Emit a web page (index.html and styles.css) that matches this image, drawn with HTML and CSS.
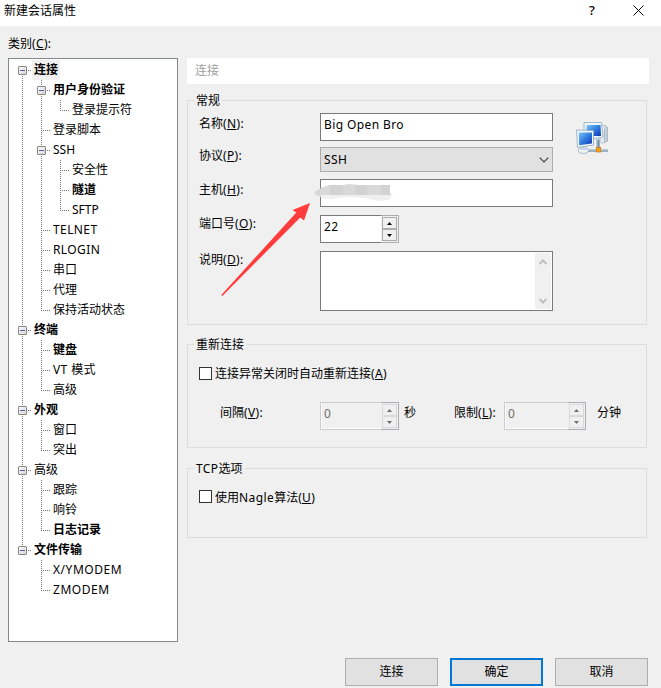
FILE: index.html
```html
<!DOCTYPE html>
<html lang="zh-CN">
<head>
<meta charset="utf-8">
<title>新建会话属性</title>
<link rel="stylesheet" href="styles.css">
</head>
<body>
<svg class="defs" width="0" height="0">
  <defs>
    <linearGradient id="knob" x1="0" y1="0" x2="1" y2="1"><stop offset="0" stop-color="#fff"/><stop offset="1" stop-color="#d4d4d4"/></linearGradient>
    <linearGradient id="screen" x1="0" y1="0" x2="1" y2="1"><stop offset="0" stop-color="#7fc4f8"/><stop offset=".5" stop-color="#2f7de0"/><stop offset="1" stop-color="#1536b0"/></linearGradient>
    <linearGradient id="case" x1="0" y1="0" x2="1" y2="0"><stop offset="0" stop-color="#fff"/><stop offset="1" stop-color="#a9bcc9"/></linearGradient>
    <symbol id="v" viewBox="0 0 19 20"><path class="dot" d="M9.5 0V20"/></symbol>
    <symbol id="t" viewBox="0 0 19 20"><path class="dot" d="M9.5 0V20M11 10.5H18"/></symbol>
    <symbol id="l" viewBox="0 0 19 20"><path class="dot" d="M9.5 0V11M11 10.5H18"/></symbol>
    <symbol id="box" viewBox="0 0 19 20"><rect x="5.5" y="6.5" width="8" height="8" rx=".6" fill="url(#knob)" stroke="#858585"/><path d="M7 10.5H12" stroke="#4b63a7"/><path class="dot" d="M15 10.5H18"/></symbol>
    <symbol id="bt" viewBox="0 0 19 20"><path class="dot" d="M9.5 0V6M9.5 16V20"/><use href="#box"/></symbol>
    <symbol id="bf" viewBox="0 0 19 20"><path class="dot" d="M9.5 16V20"/><use href="#box"/></symbol>
    <symbol id="bl" viewBox="0 0 19 20"><path class="dot" d="M9.5 0V6"/><use href="#box"/></symbol>
  </defs>
</svg>
<div class="window">
  <header class="titlebar">
    <span class="title">新建会话属性</span>
    <span class="help">?</span>
    <svg class="close" width="11" height="11" viewBox="0 0 11 11"><path d="M.5 .5L10.5 10.5M10.5 .5L.5 10.5" stroke="#000" fill="none"/></svg>
  </header>
  <main class="body">
    <section class="side">
      <div class="side-label">类别<span class="key">(<u>C</u>):</span></div>
      <div class="tree">
        <div class="row"><svg><use href="#bf"/></svg><b class="sel">连接</b></div>
        <div class="row"><svg><use href="#v"/></svg><svg><use href="#bt"/></svg><b>用户身份验证</b></div>
        <div class="row"><svg><use href="#v"/></svg><svg><use href="#v"/></svg><svg><use href="#l"/></svg><span>登录提示符</span></div>
        <div class="row"><svg><use href="#v"/></svg><svg><use href="#t"/></svg><span>登录脚本</span></div>
        <div class="row"><svg><use href="#v"/></svg><svg><use href="#bt"/></svg><span>SSH</span></div>
        <div class="row"><svg><use href="#v"/></svg><svg><use href="#v"/></svg><svg><use href="#t"/></svg><span>安全性</span></div>
        <div class="row"><svg><use href="#v"/></svg><svg><use href="#v"/></svg><svg><use href="#t"/></svg><b>隧道</b></div>
        <div class="row"><svg><use href="#v"/></svg><svg><use href="#v"/></svg><svg><use href="#l"/></svg><span>SFTP</span></div>
        <div class="row"><svg><use href="#v"/></svg><svg><use href="#t"/></svg><span class="latin">TELNET</span></div>
        <div class="row"><svg><use href="#v"/></svg><svg><use href="#t"/></svg><span class="latin">RLOGIN</span></div>
        <div class="row"><svg><use href="#v"/></svg><svg><use href="#t"/></svg><span>串口</span></div>
        <div class="row"><svg><use href="#v"/></svg><svg><use href="#t"/></svg><span>代理</span></div>
        <div class="row"><svg><use href="#v"/></svg><svg><use href="#l"/></svg><span>保持活动状态</span></div>
        <div class="row"><svg><use href="#bt"/></svg><b>终端</b></div>
        <div class="row"><svg><use href="#v"/></svg><svg><use href="#t"/></svg><b>键盘</b></div>
        <div class="row"><svg><use href="#v"/></svg><svg><use href="#t"/></svg><span class="latin">VT 模式</span></div>
        <div class="row"><svg><use href="#v"/></svg><svg><use href="#l"/></svg><span>高级</span></div>
        <div class="row"><svg><use href="#bt"/></svg><b>外观</b></div>
        <div class="row"><svg><use href="#v"/></svg><svg><use href="#t"/></svg><span>窗口</span></div>
        <div class="row"><svg><use href="#v"/></svg><svg><use href="#l"/></svg><span>突出</span></div>
        <div class="row"><svg><use href="#bt"/></svg><span>高级</span></div>
        <div class="row"><svg><use href="#v"/></svg><svg><use href="#t"/></svg><span>跟踪</span></div>
        <div class="row"><svg><use href="#v"/></svg><svg><use href="#t"/></svg><span>响铃</span></div>
        <div class="row"><svg><use href="#v"/></svg><svg><use href="#l"/></svg><b>日志记录</b></div>
        <div class="row"><svg><use href="#bl"/></svg><b>文件传输</b></div>
        <div class="row"><svg></svg><svg><use href="#t"/></svg><span class="latin wide">X/YMODEM</span></div>
        <div class="row"><svg></svg><svg><use href="#l"/></svg><span class="latin wide">ZMODEM</span></div>
      </div>
    </section>
    <section class="page">
      <h1 class="page-head">连接</h1>
      <fieldset class="group general">
        <legend>常规</legend>
        <div class="general-content">
          <div class="form">
            <div class="field name"><label class="low">名称<span class="key">(<u>N</u>):</span></label><div class="input latin">Big Open Bro</div></div>
            <div class="field proto"><label>协议<span class="key">(<u>P</u>):</span></label><div class="select latin">SSH<svg width="10" height="6" viewBox="0 0 10 6"><path d="M.7 .7L5 5L9.3 .7" fill="none" stroke="#404040" stroke-width="1.2"/></svg></div></div>
            <div class="field host"><label class="low">主机<span class="key">(<u>H</u>):</span></label><div class="input">
              <svg class="smudge" width="80" height="20" viewBox="0 0 80 20"><path d="M0 8L6 4L14 1L15 13L8 14L0 10Z" fill="#d2d2d2"/><path d="M5 9H78L74 16L62 17L50 14L30 13L16 15L6 14Z" fill="#f0f0f0"/><path d="M4 6L14 1H28L34 0L44 1H75V11H0L1 8Z" fill="#d9d9d9"/><path d="M15 1H28V11H15ZM40 1H52V11H40ZM66 1H75V11H66Z" fill="#d2d2d2"/></svg>
            </div></div>
            <div class="field port"><label>端口号<span class="key">(<u>O</u>):</span></label>
              <div class="spin spin-a"><div class="spin-text">22</div><div class="spin-ctl"><i><svg width="5" height="3"><path d="M0 3L2.5 0L5 3Z"/></svg></i><i><svg width="5" height="3"><path d="M0 0H5L2.5 3Z"/></svg></i></div></div></div>
            <div class="field desc"><label>说明<span class="key">(<u>D</u>):</span></label><div class="textarea"><div class="scroll">
              <svg width="8" height="6" viewBox="0 0 8 6"><path d="M.5 5L4 1.5L7.5 5" /></svg>
              <svg width="8" height="6" viewBox="0 0 8 6"><path d="M.5 1L4 4.5L7.5 1" /></svg></div></div></div>
          </div>
          <svg class="net" width="32" height="32" viewBox="0 0 32 32">
            <path d="M25 4L29 3L32 6V19L28 21H25Z" fill="url(#case)" stroke="#a3b4c0" stroke-width=".7"/>
            <path d="M28.5 7V20" stroke="#8fa5b5" stroke-width=".6"/>
            <path d="M8 .5L25.5 .5L27 15L17 17L8 15Z" fill="#eef6fa" stroke="#8da9bb" stroke-width=".8"/>
            <path d="M10.500 3H24.500L25 14L10.500 14Z" fill="url(#screen)"/>
            <path d="M20 17L24 16V26H20Z" fill="#b9cad6"/>
            <ellipse cx="7.500" cy="28.500" rx="5.200" ry="3" fill="#edf3f7" stroke="#8fa9b9" stroke-width=".8"/>
            <path d="M5 23H11V28H5Z" fill="#c3d6e2"/>
            <path d="M.5 8L17.500 8.500V23L1.500 25.500Z" fill="#f1f8fb" stroke="#8ba7b9" stroke-width=".8"/>
            <path d="M2.700 10.500H16V21.500L3.200 23.200Z" fill="url(#screen)"/>
            <path d="M12 28.500H32" stroke="#7795a8" stroke-width="2.400"/><path d="M12 28H32" stroke="#e3edf3" stroke-width=".8"/>
            <path d="M22.500 18V26" stroke="#6e8ea2" stroke-width="1.800"/>
            <rect x="20.300" y="25.500" width="4.400" height="4.500" fill="#f7a416" stroke="#ce7608" stroke-width=".7"/>
          </svg>
        </div>
      </fieldset>
      <fieldset class="group reconnect">
        <legend>重新连接</legend>
        <div class="check"><span class="tick"></span><label>连接异常关闭时自动重新连接<span class="key">(<u>A</u>)</span></label></div>
        <div class="limits">
          <label class="every">间隔<span class="key">(<u>V</u>):</span></label>
          <div class="spin spin-a off"><div class="spin-text">0</div><div class="spin-ctl"><i><svg width="5" height="3"><path d="M0 3L2.5 0L5 3Z"/></svg></i><i><svg width="5" height="3"><path d="M0 0H5L2.5 3Z"/></svg></i></div></div>
          <label class="sec">秒</label>
          <label class="max">限制<span class="key">(<u>L</u>):</span></label>
          <div class="spin spin-b off"><div class="spin-text">0</div><div class="spin-ctl"><i><svg width="5" height="3"><path d="M0 3L2.5 0L5 3Z"/></svg></i><i><svg width="5" height="3"><path d="M0 0H5L2.5 3Z"/></svg></i></div></div>
          <label class="min">分钟</label>
        </div>
      </fieldset>
      <fieldset class="group tcp">
        <legend><span class="latin">TCP</span>选项</legend>
        <div class="check"><span class="tick"></span><label>使用<span class="latin">Nagle</span>算法<span class="key">(<u>U</u>)</span></label></div>
      </fieldset>
    </section>
  </main>
  <footer class="actions">
    <button>连接</button><button class="primary">确定</button><button>取消</button>
  </footer>
  <svg class="arrow" width="90" height="94" viewBox="220 202 90 94"><path d="M310 203L292.500 210L296.300 212.500L221.300 295L222.300 296L300.300 217.500L304 220.500Z" fill="#ff3b3b"/></svg>
</div>
</body>
</html>
```
FILE: styles.css
```css
* { box-sizing: border-box; }
body {
  margin: 0;
  font: 12px/20px "Noto Sans", "Noto Sans CJK SC", sans-serif;
  color: #000;
}
svg { display: block; flex: none; }
.defs { position: absolute; }
.dot { fill: none; stroke: #747474; stroke-dasharray: 1 1; shape-rendering: crispEdges; }
u { text-underline-offset: 1px; text-decoration-thickness: 1px; text-decoration-skip-ink: none; }

.window {
  position: relative;
  width: 661px;
  height: 688px;
  background: #f0f0f0;
  overflow: hidden;
}
.titlebar {
  display: flex;
  height: 26px;
  padding: 0 17px 0 4px;
  background: #fff;
}
.title { flex: 1; line-height: 22px; }
.help { width: 7px; margin-right: 37px; font-size: 13px; font-weight: 500; }
.close { margin-top: 5px; }

.body { display: flex; height: 616px; padding-left: 8px; gap: 9px; }
.side { width: 170px; padding-top: 8px; }
.side-label { height: 24px; }
.tree {
  height: 584px;
  padding: 1px 0 0 4px;
  background: #fff;
  border: 1px solid #828790;
}
.row { display: flex; height: 20px; white-space: nowrap; }
.row svg { width: 19px; height: 20px; }
.row b, .row span { padding: 0 2px; }
.row .sel { background: #f0f0f0; }

.page { width: 462px; padding-top: 32px; }
.page-head {
  height: 26px;
  margin: 0 0 8px;
  padding-left: 8px;
  background: #fff;
  color: #a0a0a0;
  font-size: 12px;
  font-weight: 400;
  line-height: 25px;
}
.group {
  width: 460px;
  min-width: 0;
  margin: 0;
  padding: 0 0 0 11px;
  border: 1px solid #dcdcdc;
}
.group legend { height: 17px; margin-left: -5px; padding: 0 2px; line-height: 17px; }
.general { height: 233px; margin-bottom: 11px; }
.reconnect { height: 112px; margin-bottom: 12px; }
.tcp { height: 78px; }

.general-content { display: flex; gap: 23px; padding-top: 4px; }
.form { width: 354px; }
.field { display: flex; }
.field > label { width: 121px; height: 20px; margin-top: -1px; }
.field > label.low { margin-top: 1px; }
.name { height: 28px; margin-bottom: 6px; }
.proto { height: 25px; margin-bottom: 7px; }
.host, .port { height: 28px; margin-bottom: 8px; }
.desc { height: 60px; }
.input, .select, .textarea { width: 233px; border: 1px solid #7a7a7a; background: #fff; }
.input { position: relative; padding-left: 3px; line-height: 22px; }
.select {
  display: flex;
  justify-content: space-between;
  align-items: center;
  padding: 0 3px;
  border-color: #adadad;
  background: #e1e1e1;
}
.latin { letter-spacing: .4px; }
.wide { letter-spacing: .55px; }
.key { letter-spacing: .35px; }
.smudge { position: absolute; left: -6px; top: 4px; }
.textarea { padding: 1px; }
.scroll {
  display: flex;
  flex-direction: column;
  justify-content: space-between;
  align-items: center;
  width: 16px;
  height: 56px;
  margin-left: auto;
  padding: 6px 0 5px;
  background: #f0f0f0;
}
.scroll path { fill: none; stroke: #bfbfbf; stroke-width: 2; }
.net { margin-top: 9px; }

.spin { display: flex; height: 28px; }
.spin-a { width: 79px; }
.spin-b { width: 82px; }
.spin-text {
  flex: 1;
  padding-left: 3px;
  background: #fff;
  border: 1px solid #7a7a7a;
  border-right: 0;
  line-height: 22px;
  letter-spacing: .3px;
}
.spin-ctl {
  display: flex;
  flex-direction: column;
  width: 18px;
  padding: 1px;
  border: 1px solid #abadb3;
  border-left: 0;
}
.spin-ctl i {
  display: flex;
  flex: 1;
  align-items: center;
  justify-content: center;
  width: 15px;
  border: 1px solid #acacac;
}
.off .spin-text { background: #f0f0f0; border-color: #ccc; color: #6d6d6d; box-shadow: inset 1px -1px #fff; }
.off .spin-ctl i { border-color: #d9d9d9; }
.off path { fill: #6d6d6d; }

.check { display: flex; gap: 3px; padding-top: 11px; }
.tcp .check { padding-top: 11px; }
.tick { width: 13px; height: 13px; margin-top: 3px; border: 1px solid #333; background: #fff; }
.tcp .tick { margin-top: 2px; }
.limits { display: flex; padding: 18px 0 0 21px; white-space: nowrap; }
.limits label { height: 20px; margin-top: 1px; }
.every { width: 100px; }
.sec { width: 55px; padding-left: 5px; }
.max { width: 50px; }
.min { padding-left: 11px; }

.actions { display: flex; gap: 12px; padding: 16px 0 0 345px; }
.actions button {
  width: 93px;
  height: 28px;
  padding: 0;
  background: #e1e1e1;
  border: 1px solid #adadad;
  color: #000;
  font: inherit;
}
.actions .primary { border: 2px solid #0078d7; }
.arrow { position: absolute; left: 220px; top: 202px; }
```
